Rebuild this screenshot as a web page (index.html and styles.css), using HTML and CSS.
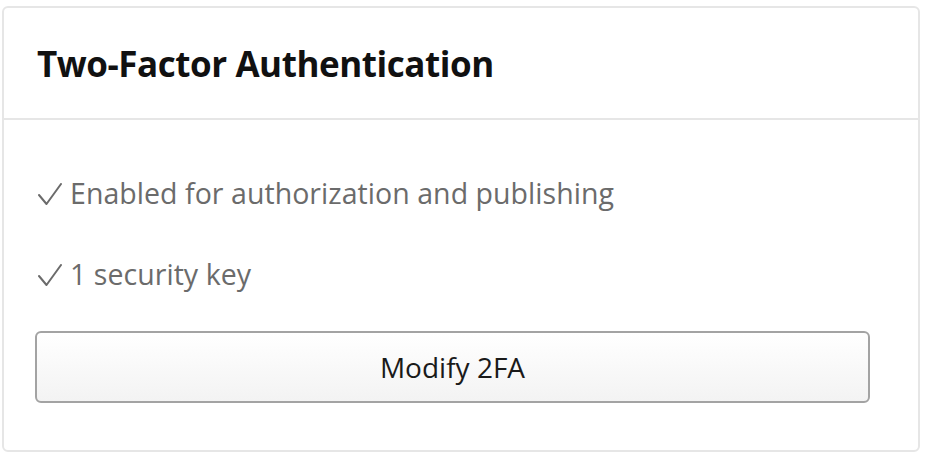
FILE: index.html
```html
<!DOCTYPE html>
<html>
<head>
<meta charset="utf-8">
<link rel="stylesheet" href="styles.css">
</head>
<body>
<section class="card">
  <header class="card-header">
    <h2 class="card-title">Two-Factor Authentication</h2>
  </header>
  <div class="card-body">
    <p class="status"><svg class="check" viewBox="0 0 24 22" width="24" height="22" aria-hidden="true"><polyline points="1,12 8.5,21 23,1" /></svg><span>Enabled for authorization and publishing</span></p>
    <p class="status status-second"><svg class="check" viewBox="0 0 24 22" width="24" height="22" aria-hidden="true"><polyline points="1,12 8.5,21 23,1" /></svg><span>1 security key</span></p>
    <button class="btn" type="button">Modify 2FA</button>
  </div>
</section>
</body>
</html>
```
FILE: styles.css
```css
html, body {
  margin: 0;
  padding: 0;
  background: #ffffff;
}
body {
  font-family: "Open Sans", "Noto Sans", sans-serif;
}
.card {
  margin: 6px 8px 6px 2px;
  border: 2px solid #e6e6e6;
  border-radius: 6px;
  box-sizing: border-box;
  width: 918px;
  height: 446px;
}
.card-header {
  height: 110px;
  border-bottom: 2px solid #e6e6e6;
  display: flex;
  align-items: center;
  padding: 0 33px;
}
.card-title {
  margin: 0;
  font-size: 35px;
  font-weight: 700;
  color: #111;
  letter-spacing: -0.45px;
}
.card-body {
  padding: 53px 47px 0 31px;
}
.status {
  margin: 0 0 0 3px;
  display: flex;
  align-items: center;
  gap: 8px;
  height: 40px;
  font-size: 28.5px;
  color: #6b6b6b;
  letter-spacing: 0.05px;
}
.check {
  flex: none;
  fill: none;
  stroke: #6b6b6b;
  stroke-width: 2;
  stroke-linecap: round;
  stroke-linejoin: round;
  margin-top: 2px;
}
.status-second {
  margin-top: 41px;
}
.btn {
  display: block;
  margin-top: 37px;
  width: 835px;
  height: 72px;
  border: 2px solid #a3a3a3;
  border-radius: 6px;
  background: linear-gradient(#ffffff, #f3f3f3);
  font-family: inherit;
  font-size: 28px;
  color: #1a1a1a;
}
```
